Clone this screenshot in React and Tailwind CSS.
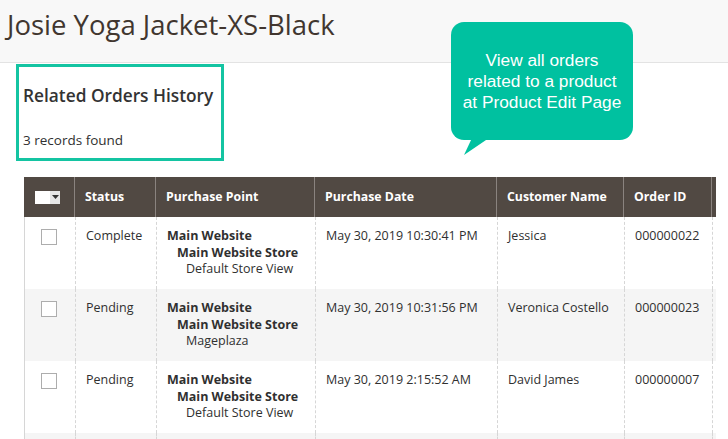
import React from "react";

const rows = [
  { status: "Complete", view: "Default Store View", date: "May 30, 2019 10:30:41 PM", name: "Jessica", id: "000000022", bg: "bg-white" },
  { status: "Pending", view: "Mageplaza", date: "May 30, 2019 10:31:56 PM", name: "Veronica Costello", id: "000000023", bg: "bg-[#f5f5f5]" },
  { status: "Pending", view: "Default Store View", date: "May 30, 2019 2:15:52 AM", name: "David James", id: "000000007", bg: "bg-white" },
];

const cols = "grid grid-cols-[50px_81px_159px_182px_127px_88px_5px]";

export default function App() {
  return (
    <div className="relative w-[728px] h-[439px] overflow-hidden bg-white font-['Open_Sans',sans-serif] text-[#303030]">
      <div className="h-[63px] bg-[#f8f8f8] border-b border-[#e3e3e3] pl-[7px] pt-[6px]">
        <h1 className="text-[27.5px] leading-[38px] text-[#41362f]">Josie Yoga Jacket-XS-Black</h1>
      </div>
      <div className="ml-[16px] mt-[1px] w-[208px] h-[97px] border-[3px] border-[#14c4a2] pl-[4px] pt-[17px]">
        <div className="text-[17.3px] font-semibold leading-[24px] text-[#333]">Related Orders History</div>
        <div className="mt-[23px] text-[13.5px] leading-[18px] text-[#303030]">3 records found</div>
      </div>
      <div className="ml-[24px] mt-[16px] w-[692px]">
        <div className={`${cols} h-[40px] bg-[#514943] text-white text-[12.3px] font-bold`}>
          <div className="flex items-center pl-[11px]">
            <div className="flex h-[13px]">
              <div className="w-[15px] bg-white" />
              <div className="w-[10px] bg-[#e6e6e6] flex items-center justify-center">
                <svg width="7" height="4" viewBox="0 0 7 4"><path d="M0 0H7L3.5 4Z" fill="#333" /></svg>
              </div>
            </div>
          </div>
          {["Status", "Purchase Point", "Purchase Date", "Customer Name", "Order ID"].map((h) => (
            <div key={h} className="flex items-center pl-[10px] border-l border-[#8a837f]">{h}</div>
          ))}
          <div className="border-l border-[#8a837f]" />
        </div>
        {rows.map((r, i) => (
          <div key={i} className={`${cols} h-[72px] ${r.bg} text-[12.5px] leading-[16.5px] border-l border-[#d6d6d6]`}>
            <div className="pt-[12px] pl-[16px]">
              <div className="w-[16px] h-[16px] border border-[#adadad] bg-white" />
            </div>
            <div className="pt-[11px] pl-[10px] border-l border-dashed border-[#d6d6d6]">{r.status}</div>
            <div className="pt-[11px] pl-[10px] border-l border-dashed border-[#d6d6d6]">
              <div className="font-bold">Main Website</div>
              <div className="font-bold pl-[10px]">Main Website Store</div>
              <div className="pl-[19px]">{r.view}</div>
            </div>
            <div className="pt-[11px] pl-[10px] border-l border-dashed border-[#d6d6d6]">{r.date}</div>
            <div className="pt-[11px] pl-[10px] border-l border-dashed border-[#d6d6d6]">{r.name}</div>
            <div className="pt-[11px] pl-[10px] border-l border-dashed border-[#d6d6d6]">{r.id}</div>
            <div className="border-l border-dashed border-[#d6d6d6]" />
          </div>
        ))}
        <div className={`${cols} h-[10px] bg-[#f5f5f5] border-l border-[#d6d6d6]`}>
          <div />
          <div className="border-l border-dashed border-[#d6d6d6]" />
          <div className="border-l border-dashed border-[#d6d6d6]" />
          <div className="border-l border-dashed border-[#d6d6d6]" />
          <div className="border-l border-dashed border-[#d6d6d6]" />
          <div className="border-l border-dashed border-[#d6d6d6]" />
          <div className="border-l border-dashed border-[#d6d6d6]" />
        </div>
      </div>
      <div className="absolute left-[451px] top-[22px] w-[182px] h-[118px] rounded-[13px] bg-[#00c1a0] flex items-center justify-center text-center text-white font-['Liberation_Sans',Arial,sans-serif] text-[17.3px] leading-[21px]">
        <div>View all orders<br />related to a product<br />at Product Edit Page</div>
      </div>
      <svg className="absolute left-[462px] top-[138px]" width="30" height="20" viewBox="0 0 30 20">
        <path d="M10 0 L27 0 L2 17 Z" fill="#00c1a0" />
      </svg>
    </div>
  );
}
